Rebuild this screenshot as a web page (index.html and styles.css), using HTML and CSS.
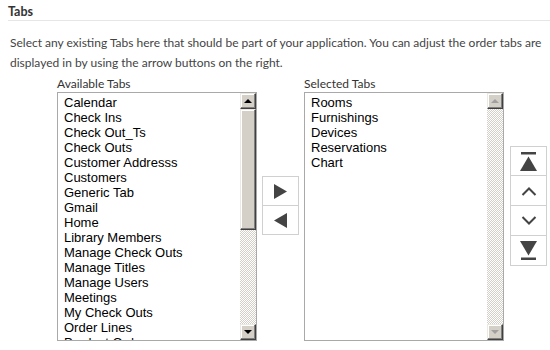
FILE: index.html
```html
<!DOCTYPE html>
<html>
<head>
<meta charset="utf-8">
<link rel="stylesheet" href="styles.css">
</head>
<body>
<div class="page">
  <div class="heading">Tabs</div>
  <p class="intro">Select any existing Tabs here that should be part of your application. You can adjust the order tabs are displayed in by using the arrow buttons on the right.</p>
  <div class="picker">
    <div class="col">
      <div class="label">Available Tabs</div>
      <div class="listbox">
        <ul class="items">
          <li>Calendar</li>
          <li>Check Ins</li>
          <li>Check Out_Ts</li>
          <li>Check Outs</li>
          <li>Customer Addresss</li>
          <li>Customers</li>
          <li>Generic Tab</li>
          <li>Gmail</li>
          <li>Home</li>
          <li>Library Members</li>
          <li>Manage Check Outs</li>
          <li>Manage Titles</li>
          <li>Manage Users</li>
          <li>Meetings</li>
          <li>My Check Outs</li>
          <li>Order Lines</li>
          <li>Product Orders</li>
        </ul>
        <div class="scrollbar">
          <div class="sb-btn"><span class="arr up"></span></div>
          <div class="sb-thumb"></div>
          <div class="sb-track"></div>
          <div class="sb-btn"><span class="arr down"></span></div>
        </div>
      </div>
    </div>
    <div class="movers">
      <button class="btn" aria-label="Add">
        <svg width="13" height="15" viewBox="0 0 13 15"><path d="M0 0L13 7.5L0 15Z" fill="#444"/></svg>
      </button>
      <button class="btn" aria-label="Remove">
        <svg width="13" height="15" viewBox="0 0 13 15"><path d="M13 0L0 7.5L13 15Z" fill="#444"/></svg>
      </button>
    </div>
    <div class="col">
      <div class="label">Selected Tabs</div>
      <div class="listbox">
        <ul class="items">
          <li>Rooms</li>
          <li>Furnishings</li>
          <li>Devices</li>
          <li>Reservations</li>
          <li>Chart</li>
        </ul>
        <div class="scrollbar disabled">
          <div class="sb-btn"><span class="arr up"></span></div>
          <div class="sb-track"></div>
          <div class="sb-btn"><span class="arr down"></span></div>
        </div>
      </div>
    </div>
    <div class="order">
      <button class="btn" aria-label="Move to top">
        <svg width="17" height="19" viewBox="0 0 17 19"><rect x="1" y="0" width="15" height="2.5" fill="#444"/><path d="M8.5 4.5L17 19H0Z" fill="#444"/></svg>
      </button>
      <button class="btn" aria-label="Move up">
        <svg width="16" height="10" viewBox="0 0 16 10"><path d="M1.5 9L8 2.5L14.5 9" fill="none" stroke="#444" stroke-width="2"/></svg>
      </button>
      <button class="btn" aria-label="Move down">
        <svg width="16" height="10" viewBox="0 0 16 10"><path d="M1.5 1L8 7.5L14.5 1" fill="none" stroke="#444" stroke-width="2"/></svg>
      </button>
      <button class="btn" aria-label="Move to bottom">
        <svg width="17" height="19" viewBox="0 0 17 19"><path d="M0 0H17L8.5 14.5Z" fill="#444"/><rect x="1" y="16.5" width="15" height="2.5" fill="#444"/></svg>
      </button>
    </div>
  </div>
</div>
</body>
</html>
```

FILE: styles.css
```css
html, body {
  margin: 0;
  padding: 0;
  background: #fff;
}
body {
  font-family: Lato, "Open Sans", sans-serif;
  color: #333;
  width: 550px;
  height: 350px;
  overflow: hidden;
}
.page {
  padding: 0 0 0 8px;
}
.heading {
  font-size: 12.5px;
  font-weight: bold;
  line-height: 14px;
  padding-top: 5px;
  padding-bottom: 1px;
  border-bottom: 1px solid #e6e6e6;
  color: #333;
}
.intro {
  margin: 12px 0 0 0;
  padding-left: 2px;
  font-size: 12px;
  line-height: 20px;
  color: #444;
  width: 535px;
}
.picker {
  display: flex;
  align-items: flex-start;
  margin-left: 49px;
  margin-top: 3px;
}
.col {
  display: flex;
  flex-direction: column;
}
.label {
  font-size: 12px;
  line-height: 16px;
  color: #333;
}
.listbox {
  width: 198px;
  height: 247px;
  border: 1px solid #a9a9a9;
  display: flex;
  overflow: hidden;
  background: #fff;
}
.items {
  list-style: none;
  margin: 0;
  padding: 2px 0 0 6px;
  flex: 1;
  font-family: "Liberation Sans", Arial, sans-serif;
  font-size: 13px;
  line-height: 15px;
  color: #000;
  overflow: hidden;
}
.scrollbar {
  width: 16px;
  display: flex;
  flex-direction: column;
  flex: none;
}
.sb-btn {
  width: 16px;
  height: 16px;
  box-sizing: border-box;
  background: #d4d0c8;
  border-top: 1px solid #ece9e2;
  border-left: 1px solid #ece9e2;
  border-right: 1px solid #404040;
  border-bottom: 1px solid #404040;
  box-shadow: inset -1px -1px 0 #808080, inset 1px 1px 0 #fff;
  display: flex;
  align-items: center;
  justify-content: center;
  flex: none;
}
.arr {
  width: 0;
  height: 0;
  border-left: 4px solid transparent;
  border-right: 4px solid transparent;
}
.arr.up { border-bottom: 4px solid #000; }
.arr.down { border-top: 4px solid #000; }
.disabled .arr.up { border-bottom-color: #a0a0a0; }
.disabled .arr.down { border-top-color: #a0a0a0; }
.sb-thumb {
  height: 121px;
  box-sizing: border-box;
  background: #d4d0c8;
  border-top: 1px solid #ece9e2;
  border-left: 1px solid #ece9e2;
  border-right: 1px solid #404040;
  border-bottom: 1px solid #404040;
  box-shadow: inset -1px -1px 0 #808080, inset 1px 1px 0 #fff;
  flex: none;
}
.sb-track {
  flex: 1;
  background: repeating-conic-gradient(#d4d0c8 0 25%, #fff 0 50%) 0 0 / 2px 2px;
}
.movers {
  display: flex;
  flex-direction: column;
  margin: 100px 5px 0 5px;
}
.order {
  display: flex;
  flex-direction: column;
  margin: 70px 0 0 6px;
}
.btn {
  width: 37px;
  height: 30px;
  box-sizing: border-box;
  border: 1px solid #d0d0d0;
  background: #fff;
  padding: 0;
  display: flex;
  align-items: center;
  justify-content: center;
  cursor: pointer;
}
.btn + .btn {
  border-top: none;
  height: 29px;
}
.order .btn + .btn {
  height: 30px;
}
```
